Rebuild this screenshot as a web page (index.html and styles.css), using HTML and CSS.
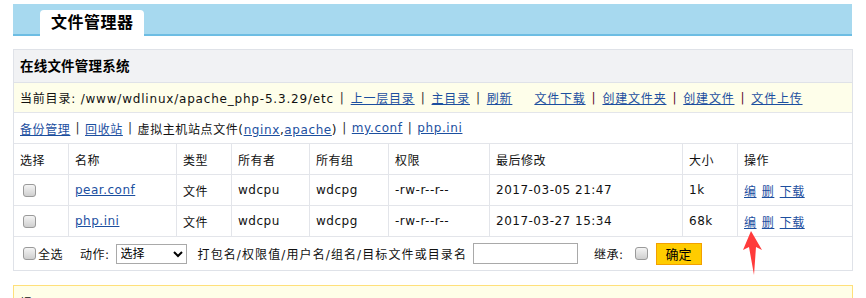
FILE: index.html
```html
<!DOCTYPE html>
<html lang="zh-CN">
<head>
    <meta charset="UTF-8">
    <title>文件管理器</title>
    <link rel="stylesheet" href="styles.css">
</head>
<body>
    <div class="top-bar">
        <div class="tab">文件管理器</div>
    </div>

    <div class="panel">
        <div class="panel-title">在线文件管理系统</div>
        <div class="bar bar-yellow">
            <span>当前目录: /www/wdlinux/apache_php-5.3.29/etc</span>
            <span class="sep">|</span><a href="#">上一层目录</a>
            <span class="sep">|</span><a href="#">主目录</a>
            <span class="sep">|</span><a href="#">刷新</a>
            <a href="#" class="gap">文件下载</a>
            <span class="sep dark">|</span><a href="#">创建文件夹</a>
            <span class="sep dark">|</span><a href="#">创建文件</a>
            <span class="sep dark">|</span><a href="#">文件上传</a>
        </div>
        <div class="bar bar-links">
            <a href="#">备份管理</a>
            <span class="sep">|</span><a href="#">回收站</a>
            <span class="sep">|</span><span>虚拟主机站点文件(<a href="#">nginx</a>,<a href="#">apache</a>)</span>
            <span class="sep">|</span><a href="#">my.conf</a>
            <span class="sep">|</span><a href="#">php.ini</a>
        </div>

        <table class="files">
            <thead>
                <tr>
                    <th class="c-sel">选择</th>
                    <th class="c-name">名称</th>
                    <th class="c-type">类型</th>
                    <th class="c-owner">所有者</th>
                    <th class="c-group">所有组</th>
                    <th class="c-perm">权限</th>
                    <th class="c-time">最后修改</th>
                    <th class="c-size">大小</th>
                    <th>操作</th>
                </tr>
            </thead>
            <tbody>
                <tr>
                    <td><input type="checkbox" class="chk"></td>
                    <td><a href="#">pear.conf</a></td>
                    <td>文件</td>
                    <td>wdcpu</td>
                    <td>wdcpg</td>
                    <td>-rw-r--r--</td>
                    <td>2017-03-05 21:47</td>
                    <td>1k</td>
                    <td class="ops"><a href="#">编</a> <a href="#">删</a> <a href="#">下载</a></td>
                </tr>
                <tr>
                    <td><input type="checkbox" class="chk"></td>
                    <td><a href="#">php.ini</a></td>
                    <td>文件</td>
                    <td>wdcpu</td>
                    <td>wdcpg</td>
                    <td>-rw-r--r--</td>
                    <td>2017-03-27 15:34</td>
                    <td>68k</td>
                    <td class="ops"><a href="#">编</a> <a href="#">删</a> <a href="#">下载</a></td>
                </tr>
            </tbody>
        </table>

        <div class="actions">
            <label class="all"><input type="checkbox" class="chk">全选</label>
            <span class="label">动作:</span>
            <select class="action-select">
                <option>选择</option>
            </select>
            <span class="hint">打包名/权限值/用户名/组名/目标文件或目录名</span>
            <input type="text" class="target">
            <span class="label inherit">继承:</span>
            <input type="checkbox" class="chk">
            <button class="ok">确定</button>
        </div>
    </div>

    <div class="note">提示:</div>

    <svg class="arrow" width="30" height="50" viewBox="0 0 30 50">
        <path d="M9 0 L1 19 L7 16 L12 44 L14 16 L20 19 Z" fill="#ff3b3b"/>
    </svg>
</body>
</html>
```

FILE: styles.css
```css
body {
    margin: 0;
    font-family: "DejaVu Sans", "Noto Sans CJK SC", sans-serif;
    font-size: 12px;
    letter-spacing: 0.5px;
    color: #111;
    background: #fff;
    position: relative;
}

a {
    color: #1c4f9f;
    text-decoration: underline;
}

.top-bar {
    margin: 4px 14px 0 13px;
    height: 30px;
    padding-left: 27px;
    background-color: #a7d9ef;
    border-bottom: 2px solid #6dbde3;
    display: flex;
    align-items: flex-end;
}

.tab {
    width: 104px;
    height: 26px;
    margin-bottom: -2px;
    background: #fff;
    border-radius: 4px 4px 0 0;
    box-sizing: border-box;
    padding-left: 11px;
    font-size: 16px;
    font-weight: bold;
    line-height: 26px;
    color: #000;
}

.panel {
    margin: 13px 0 0 13px;
    width: 840px;
    border: 1px solid #dfe2e8;
    box-sizing: border-box;
}

.panel-title {
    height: 32px;
    line-height: 32px;
    padding-left: 6px;
    background: #f1f2f4;
    border-bottom: 1px solid #dfe2e8;
    font-size: 13.5px;
    font-weight: bold;
    letter-spacing: 0.2px;
    color: #000;
}

.bar {
    height: 30px;
    display: flex;
    align-items: center;
    padding-left: 6px;
    border-bottom: 1px solid #e3e5ea;
    white-space: nowrap;
    letter-spacing: 0.8px;
}

.bar-yellow {
    height: 29px;
    background: #fefeea;
}

.bar-yellow .sep {
    margin: 0 6px;
}

.bar-links {
    letter-spacing: 0.6px;
}

.sep {
    margin: 0 5px;
    color: #333;
}

.sep.dark {
    color: #5a0b2e;
}

.gap {
    margin-left: 22px;
}

.files {
    width: 100%;
    border-collapse: collapse;
}

.files th,
.files td {
    height: 30px;
    padding: 0 0 0 6px;
    text-align: left;
    font-weight: normal;
    border-right: 1px solid #e3e5ea;
    border-bottom: 1px solid #e3e5ea;
    white-space: nowrap;
}

.files th:last-child,
.files td:last-child {
    border-right: none;
}

.c-sel { width: 48px; }
.c-name { width: 101px; }
.c-type { width: 48px; }
.c-owner { width: 71px; }
.c-group { width: 72px; }
.c-perm { width: 94px; }
.c-time { width: 186px; }
.c-size { width: 48px; }

.ops a {
    margin-right: 1px;
}

.chk {
    appearance: none;
    -webkit-appearance: none;
    width: 13px;
    height: 13px;
    margin: 0 0 0 3px;
    border: 1px solid #9a9a9a;
    border-radius: 3px;
    background: linear-gradient(#f4f4f4, #cfcfcf);
    box-sizing: border-box;
    vertical-align: middle;
}

.actions {
    height: 33px;
    display: flex;
    align-items: center;
    padding-left: 6px;
    white-space: nowrap;
}

.all {
    display: flex;
    align-items: center;
}

.all .chk {
    margin-right: 2px;
}

.label {
    margin-left: 17px;
}

.action-select {
    width: 71px;
    height: 20px;
    margin-left: 6px;
    border: 1px solid #a9a9a9;
    background: #fff;
    font-family: "DejaVu Sans", "Noto Sans CJK SC", sans-serif;
    font-size: 12px;
    border-radius: 0;
}

.hint {
    margin-left: 11px;
    letter-spacing: 1.1px;
}

.target {
    width: 105px;
    height: 21px;
    margin-left: 6px;
    border: 1px solid #a9a9a9;
    box-sizing: border-box;
    padding: 0 3px;
}

.inherit {
    margin-left: 16px;
}

.actions .inherit + .chk {
    margin-left: 11px;
}

.ok {
    width: 46px;
    height: 22px;
    margin-left: 8px;
    padding: 0;
    background: #ffcc00;
    border: 1px solid #f3a000;
    font-family: "Noto Sans CJK SC", sans-serif;
    font-size: 13px;
    color: #000;
}

.note {
    margin: 14px 0 0 13px;
    width: 840px;
    height: 40px;
    box-sizing: border-box;
    padding: 8px 6px;
    background: #fffee8;
    border: 1px solid #ffe07a;
}

.arrow {
    position: absolute;
    left: 742px;
    top: 231px;
}
```
